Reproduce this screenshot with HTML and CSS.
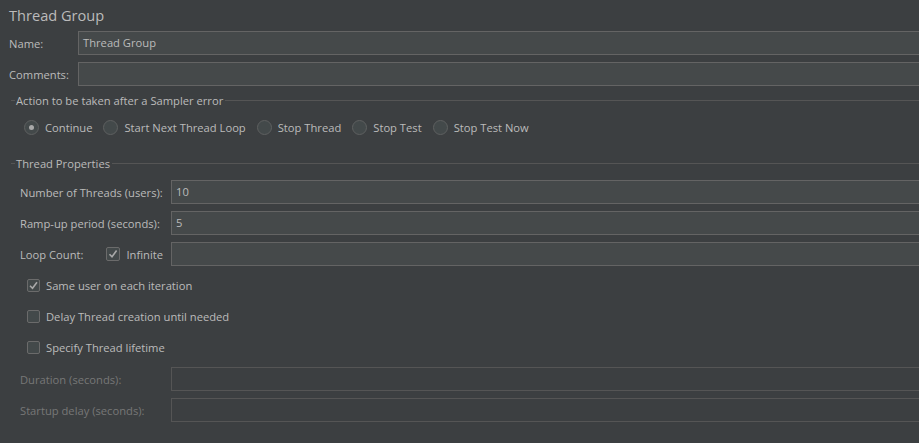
FILE: index.html
```html
<!DOCTYPE html>
<html lang="en">
<head>
  <meta charset="UTF-8">
  <title>Thread Group</title>
  <link rel="stylesheet" href="styles.css">
</head>
<body>
  <div class="panel">
    <h1 class="panel-title">Thread Group</h1>

    <!-- Name / comments -->
    <div class="form-grid form-grid-top">
      <label class="field-label">Name:</label>
      <div class="text-field">Thread Group</div>
      <label class="field-label">Comments:</label>
      <div class="text-field"></div>
    </div>

    <!-- Sampler error options -->
    <div class="group-title">
      <span class="group-stub"></span>
      <span>Action to be taken after a Sampler error</span>
      <span class="group-line"></span>
    </div>
    <div class="radio-row">
      <span class="radio checked"><i class="radio-mark"></i>Continue</span>
      <span class="radio"><i class="radio-mark"></i>Start Next Thread Loop</span>
      <span class="radio"><i class="radio-mark"></i>Stop Thread</span>
      <span class="radio"><i class="radio-mark"></i>Stop Test</span>
      <span class="radio"><i class="radio-mark"></i>Stop Test Now</span>
    </div>

    <!-- Thread properties -->
    <div class="group-title group-title-props">
      <span class="group-stub"></span>
      <span>Thread Properties</span>
      <span class="group-line"></span>
    </div>
    <div class="group-body">
      <div class="form-grid form-grid-props">
        <label class="field-label">Number of Threads (users):</label>
        <div class="text-field">10</div>
        <label class="field-label">Ramp-up period (seconds):</label>
        <div class="text-field">5</div>
        <div class="field-label loop-label">
          <span>Loop Count:</span>
          <span class="checkbox checked">
            <svg class="check-box" width="14" height="14" viewBox="0 0 14 14">
              <rect x="0.5" y="0.5" width="13" height="13" rx="1.5" />
              <path d="M3.5 7.2 L6 9.8 L10.6 3.6" />
            </svg>Infinite
          </span>
        </div>
        <div class="text-field"></div>
      </div>

      <div class="check-list">
        <span class="checkbox checked">
          <svg class="check-box" width="13" height="13" viewBox="0 0 13 13">
            <rect x="0.5" y="0.5" width="12" height="12" rx="1.5" />
            <path d="M3 6.8 L5.5 9.3 L10 3.2" />
          </svg>Same user on each iteration
        </span>
        <span class="checkbox">
          <svg class="check-box" width="13" height="13" viewBox="0 0 13 13">
            <rect x="0.5" y="0.5" width="12" height="12" rx="1.5" />
          </svg>Delay Thread creation until needed
        </span>
        <span class="checkbox">
          <svg class="check-box" width="13" height="13" viewBox="0 0 13 13">
            <rect x="0.5" y="0.5" width="12" height="12" rx="1.5" />
          </svg>Specify Thread lifetime
        </span>
      </div>

      <div class="form-grid form-grid-props form-grid-disabled">
        <label class="field-label">Duration (seconds):</label>
        <div class="text-field"></div>
        <label class="field-label">Startup delay (seconds):</label>
        <div class="text-field"></div>
      </div>
    </div>
  </div>
</body>
</html>
```

FILE: styles.css
```css
:root {
  --panel-bg: #3c3f41;
  --field-bg: #45494a;
  --field-border: #646464;
  --text: #bbbbbb;
  --text-disabled: #777777;
  --line: #555555;
}

html, body {
  margin: 0;
  padding: 0;
  background: var(--panel-bg);
  overflow: hidden;
}

body {
  font-family: "Open Sans", "Noto Sans", sans-serif;
  font-size: 11.2px;
  color: var(--text);
}

.panel {
  padding: 4px 0 0 9px;
  margin-right: -4px;
}

.panel-title {
  margin: 0;
  font-size: 14.6px;
  font-weight: 400;
  line-height: 22px;
}

/* Label + field rows */
.form-grid {
  display: grid;
  row-gap: 7px;
  align-items: center;
}

.form-grid-top {
  grid-template-columns: 69px 1fr;
  margin-top: 5px;
}

.form-grid-props {
  grid-template-columns: 151px 1fr;
}

.field-label {
  white-space: nowrap;
}

.text-field {
  height: 22px;
  line-height: 22px;
  padding: 0 4px;
  background: var(--field-bg);
  border: 1px solid var(--field-border);
}

.form-grid-disabled {
  margin-top: 13px;
}

.form-grid-disabled .field-label {
  color: var(--text-disabled);
}

.form-grid-disabled .text-field {
  background: var(--panel-bg);
  border-color: #555;
}

/* Titled group header: line runs through the title */
.group-title {
  display: flex;
  align-items: center;
  gap: 1px;
  height: 17px;
  margin: 6px 0 0 2px;
  white-space: nowrap;
}

.group-stub,
.group-line {
  height: 1px;
  background: var(--line);
}

.group-stub {
  width: 4px;
}

.group-line {
  flex: 1;
  margin-left: 1px;
}

.group-title-props {
  margin-top: 20px;
}

.group-body {
  padding: 8px 0 0 11px;
}

/* Radio buttons */
.radio-row {
  display: flex;
  gap: 11px;
  margin-top: 11px;
  padding-left: 15px;
  height: 15px;
  align-items: center;
}

.radio {
  display: flex;
  align-items: center;
  white-space: nowrap;
}

.radio-mark {
  box-sizing: border-box;
  width: 15px;
  height: 15px;
  border-radius: 50%;
  border: 1px solid #5e6060;
  background: #43494a;
  margin-right: 6px;
  display: flex;
  align-items: center;
  justify-content: center;
}

.radio.checked .radio-mark::after {
  content: "";
  width: 5px;
  height: 5px;
  border-radius: 50%;
  background: #a9a9a9;
}

/* Checkboxes */
.checkbox {
  display: inline-flex;
  align-items: center;
  white-space: nowrap;
}

.check-box {
  margin-right: 6px;
  flex: none;
}

.check-box rect {
  fill: #43494a;
  stroke: #6b6b6b;
}

.check-box path {
  fill: none;
  stroke: #a9a9a9;
  stroke-width: 1.6;
}

.loop-label {
  display: flex;
  align-items: center;
}

.loop-label .checkbox {
  margin-left: 23px;
}

.check-list {
  display: flex;
  flex-direction: column;
  gap: 18px;
  padding: 13px 0 0 7px;
}

.check-list .checkbox {
  height: 13px;
}
```
